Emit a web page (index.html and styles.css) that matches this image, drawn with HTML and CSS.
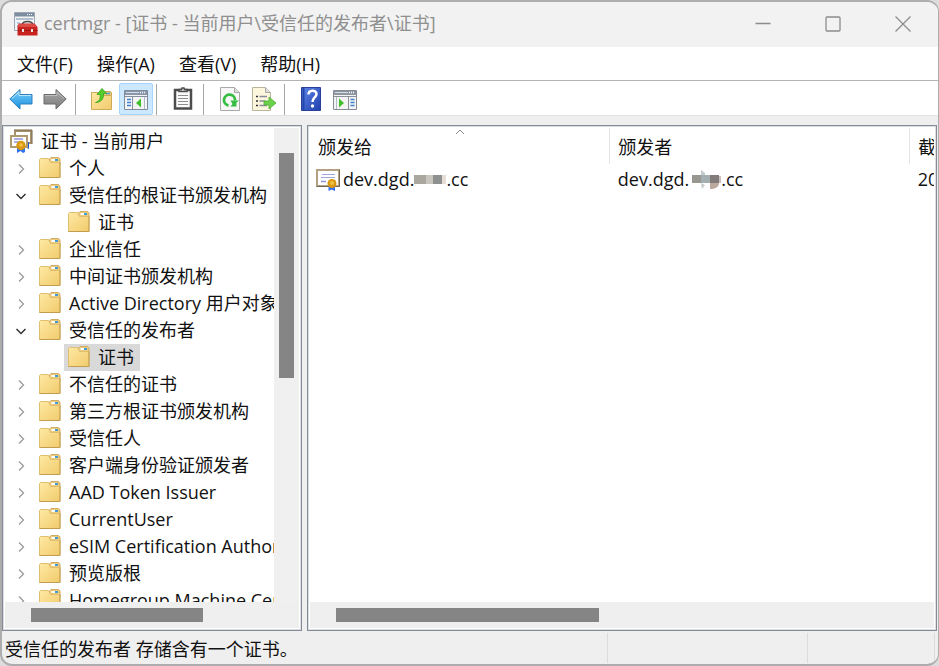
FILE: index.html
```html
<!DOCTYPE html>
<html lang="zh-CN">
<head>
    <meta charset="UTF-8">
    <meta name="viewport" content="width=device-width, initial-scale=1.0">
    <title>certmgr</title>
    <link rel="stylesheet" href="styles.css">
</head>
<body>
    <svg class="sprite" aria-hidden="true">
        <defs>
            <linearGradient id="gold" x1="0" y1="0" x2="1" y2="1">
                <stop offset="0" stop-color="#ffe9a4"/>
                <stop offset="1" stop-color="#f0cb6c"/>
            </linearGradient>
            <linearGradient id="blue" x1="0" y1="0" x2="0" y2="1">
                <stop offset="0" stop-color="#7fd0fa"/>
                <stop offset="1" stop-color="#1590e0"/>
            </linearGradient>
            <linearGradient id="grey" x1="0" y1="0" x2="0" y2="1">
                <stop offset="0" stop-color="#a8a8a8"/>
                <stop offset="1" stop-color="#7c7c7c"/>
            </linearGradient>
            <linearGradient id="help" x1="0" y1="0" x2="1" y2="1">
                <stop offset="0" stop-color="#5f86e6"/>
                <stop offset="1" stop-color="#1f3fae"/>
            </linearGradient>
        </defs>
        <symbol id="folder" viewBox="0 0 22 22">
            <path d="M10.500 6V2L12 .5h7.500L21 2v6z" fill="#eccb7c" stroke="#cfac62"/>
            <path d="M12.500 3h3.500" stroke="#fff" stroke-width="2"/>
            <path d="M16 3h3" stroke="#3f9ad8" stroke-width="2"/>
            <path d="M.5 20.500V2.500L1.500 1.500h8l2 4h9.500v15z" fill="url(#gold)" stroke="#e0bf70"/>
            <path d="M.5 20.500h20.500v-15" fill="none" stroke="#c29c50"/>
        </symbol>
        <symbol id="cert" viewBox="0 0 24 22">
            <path d="M1 1h22v16H1z" fill="#fff" stroke="#b5a181" stroke-width="2"/>
            <path d="M.5 17.500h23V.5" fill="none" stroke="#766750"/>
            <path d="M6 5.500h13M5 8.500h14" stroke="#a3a6dc" stroke-width="1.200"/>
            <path d="M5 12.500h5" stroke="#8f94d6" stroke-width="1.500"/>
            <path d="M12.500 16v6l3-1.500L19 22v-6z" fill="#2f6ff0"/>
            <circle cx="16" cy="14.500" r="4.500" fill="#d99a12"/>
            <circle cx="16" cy="14" r="2" fill="#f3c14a"/>
        </symbol>
        <symbol id="certs" viewBox="0 0 24 24">
            <path d="M6 2h16v12H6z" fill="#fff" stroke="#a8936e" stroke-width="2"/>
            <path d="M5 1h18v14" fill="none" stroke="#766750"/>
            <path d="M15 13v7l2-1.500 3 1.500v-7z" fill="#2459c8"/>
            <path d="M2 7h16v11H2z" fill="#fff" stroke="#b09a74" stroke-width="2"/>
            <path d="M5 10h9M5 13h5" stroke="#9297dc" stroke-width="1.500"/>
            <path d="M8 17v7l3.500-2 2.500 2 2-1v-6z" fill="#2f6ff0"/>
            <circle cx="12" cy="16.500" r="4.700" fill="#d99a12"/>
            <circle cx="12" cy="16" r="1.800" fill="#f3c14a"/>
        </symbol>
        <symbol id="closed" viewBox="0 0 12 12">
            <path d="M4 1.500L8.500 6 4 10.500" fill="none" stroke="#9a9a9a" stroke-width="1.300"/>
        </symbol>
        <symbol id="open" viewBox="0 0 12 12">
            <path d="M1.500 4L6 8.500 10.500 4" fill="none" stroke="#333" stroke-width="1.500"/>
        </symbol>
    </svg>

    <div class="window">
        <header class="titlebar">
            <svg class="app-icon" viewBox="0 0 24 24" aria-hidden="true">
                <path d="M.5.500h20v18H.5z" fill="#f2f5f8" stroke="#9ba6b2"/>
                <path d="M1 1h19v3.500H1z" fill="#7d8da0"/>
                <path d="M13 2.500h5" stroke="#fff" stroke-dasharray="1 1"/>
                <path d="M2 7h17" stroke="#b3c0cc" stroke-width="2"/>
                <path d="M3 11h3M3 14h3" stroke="#7d9cc4"/>
                <path d="M8.500 12.500c0-4 10-4 10 0" fill="none" stroke="#4a4a4a" stroke-width="1.500"/>
                <path d="M5 11.500h15.500L23.500 15v8.500H3.500V14z" fill="#c92321"/>
                <path d="M5 12h15.500L23 15H4z" fill="#dc4c45"/>
                <path d="M4 18.500h19.500" stroke="#a01818"/>
                <path d="M8 17h2v3H8zM17 17h2v3h-2z" fill="#e9e4e2"/>
            </svg>
            <h1 class="title">certmgr - [证书 - 当前用户\受信任的发布者\证书]</h1>
            <button class="caption-btn" aria-label="最小化">
                <svg viewBox="0 0 16 16"><path d="M.5 7.500h15"/></svg>
            </button>
            <button class="caption-btn" aria-label="最大化">
                <svg viewBox="0 0 16 16"><rect x="1" y="1" width="14" height="14" rx="1"/></svg>
            </button>
            <button class="caption-btn" aria-label="关闭">
                <svg viewBox="0 0 16 16"><path d="M.5.500l15 15M15.500.500l-15 15"/></svg>
            </button>
        </header>

        <nav class="menu">
            <button>文件(F)</button>
            <button>操作(A)</button>
            <button>查看(V)</button>
            <button>帮助(H)</button>
        </nav>

        <div class="toolbar">
            <button aria-label="后退">
                <svg viewBox="0 0 24 24">
                    <path d="M.8 12L11 2.500v5h12v9.500H11v5z" fill="url(#blue)" stroke="#2f7fbd"/>
                    <path d="M3 11.500L10 5v3.500h12" fill="none" stroke="#b5e4fb"/>
                </svg>
            </button>
            <button aria-label="前进">
                <svg viewBox="0 0 24 24">
                    <path d="M23.200 12L13 2.500v5H1v9.500h12v5z" fill="url(#grey)" stroke="#6b6b6b"/>
                    <path d="M2 8.500h12V5l7 6.500" fill="none" stroke="#bdbdbd"/>
                </svg>
            </button>
            <span class="sep"></span>
            <button aria-label="向上">
                <svg viewBox="0 0 24 24">
                    <path d="M12.500 8V4.500h8l1 1.500v5z" fill="#eccb7c" stroke="#c9a558"/>
                    <path d="M16 6.500h4" stroke="#3f9ad8" stroke-width="1.500"/>
                    <path d="M1.500 22.500v-17h10l2 3h8v14z" fill="url(#gold)" stroke="#cfaa58"/>
                    <path d="M5.500 15.500c4-1 5-4 4.700-8H7L12 1.500l4.500 5H13.500c.5 6-3 9-8 9z" fill="#52cf2c" stroke="#36a31a" stroke-width=".8"/>
                </svg>
            </button>
            <button class="active" aria-label="显示/隐藏控制台树">
                <svg viewBox="0 0 24 24">
                    <path d="M.5 3.500h23v19H.5z" fill="#f4f4f4" stroke="#7f8a9b"/>
                    <path d="M1 4h22v4H1z" fill="#8896aa"/>
                    <path d="M2 5.500h13" stroke="#d5dde8"/>
                    <path d="M16 5.500h6" stroke="#fff" stroke-width="1.500" stroke-dasharray="1 1"/>
                    <path d="M1 9.500h22M8.500 10v12" stroke="#8490a2"/>
                    <path d="M3 12.500h4M3 15.500h4M3 18.500h4" stroke="#3d7fd0" stroke-width="1.500"/>
                    <path d="M12 16l5-4.500v9z" fill="#3fbf2a"/>
                    <path d="M20.500 10v12" stroke="#b3b9c2"/>
                </svg>
            </button>
            <span class="sep"></span>
            <button aria-label="属性">
                <svg viewBox="0 0 24 24">
                    <path d="M4 3h16v18.500H4z" fill="#fafafa" stroke="#4c4c4c" stroke-width="2.500"/>
                    <path d="M8 4.500V2.500h2.500L11 1h2l.5 1.500H16v2z" fill="#ddd" stroke="#4c4c4c" stroke-width="1.500"/>
                    <path d="M7 8.500h10M7 11.500h10M7 14.500h10M7 17.500h10" stroke="#8d8d8d"/>
                </svg>
            </button>
            <span class="sep"></span>
            <button aria-label="刷新">
                <svg viewBox="0 0 24 24">
                    <path d="M2.500.500h14l5 5v18h-19z" fill="#f7f7f7" stroke="#a9a9a9"/>
                    <path d="M16.500.500v5h5" fill="#ddd" stroke="#a9a9a9"/>
                    <path d="M10.500 18.500a5.500 5.500 0 1 1 6.500-5" fill="none" stroke="#35bd43" stroke-width="2.800"/>
                    <path d="M12.500 13.500h8.500l-2.500 2v4h-6l2-2.500z" fill="#35bd43"/>
                </svg>
            </button>
            <button aria-label="导出列表">
                <svg viewBox="0 0 24 24">
                    <path d="M.5.500h13l5 5v18H.5z" fill="#fbf6dc" stroke="#b9b49c"/>
                    <path d="M13.500.500v5h5" fill="#ddd" stroke="#a9a9a9"/>
                    <path d="M4 9.500h2M4 14h2M4 18.500h2" stroke="#333" stroke-width="1.500"/>
                    <path d="M7.500 9.500H15M7.500 14H13M7.500 18.500H15" stroke="#8a8a9e" stroke-width="1.500"/>
                    <path d="M12 14h5v-4l7 6-7 6v-4h-5z" fill="#6ad24a" stroke="#4fae34" stroke-width=".8"/>
                </svg>
            </button>
            <span class="sep"></span>
            <button aria-label="帮助">
                <svg viewBox="0 0 24 24">
                    <path d="M2.500.500h19v23h-19z" fill="url(#help)" stroke="#274099"/>
                    <path d="M4.500 1v22" stroke="#2346ae" stroke-width="2"/>
                    <path d="M9.500 7.500c0-5 8-5 8-.500 0 3.500-4 3.500-4 8" fill="none" stroke="#fff" stroke-width="2.500"/>
                    <circle cx="13.500" cy="19" r="1.700" fill="#fff"/>
                </svg>
            </button>
            <button aria-label="显示/隐藏操作窗格">
                <svg viewBox="0 0 24 24">
                    <path d="M.5 3.500h23v19H.5z" fill="#f4f4f4" stroke="#858b94"/>
                    <path d="M1 4h22v4H1z" fill="#8e969f"/>
                    <path d="M2 5.500h13" stroke="#d5dde8"/>
                    <path d="M16 5.500h6" stroke="#fff" stroke-width="1.500" stroke-dasharray="1 1"/>
                    <path d="M1 9.500h22M15.500 10v12" stroke="#8a9099"/>
                    <path d="M17.500 12.500h4M17.500 15.500h4M17.500 18.500h4" stroke="#3d7fd0" stroke-width="1.500"/>
                    <path d="M11 16l-5-4.500v9z" fill="#3fbf2a"/>
                    <path d="M3.500 10v12" stroke="#b3b9c2"/>
                </svg>
            </button>
        </div>

        <main class="panes">
            <section class="pane tree-pane">
                <div class="tree-view">
                    <ul class="tree">
                        <li class="node root"><svg class="icon"><use href="#certs"/></svg><span>证书 - 当前用户</span></li>
                        <li class="node"><button class="toggle" aria-label="展开"><svg><use href="#closed"/></svg></button><svg class="icon"><use href="#folder"/></svg><span>个人</span></li>
                        <li class="node"><button class="toggle" aria-label="折叠"><svg><use href="#open"/></svg></button><svg class="icon"><use href="#folder"/></svg><span>受信任的根证书颁发机构</span></li>
                        <li class="node child"><svg class="icon"><use href="#folder"/></svg><span>证书</span></li>
                        <li class="node"><button class="toggle" aria-label="展开"><svg><use href="#closed"/></svg></button><svg class="icon"><use href="#folder"/></svg><span>企业信任</span></li>
                        <li class="node"><button class="toggle" aria-label="展开"><svg><use href="#closed"/></svg></button><svg class="icon"><use href="#folder"/></svg><span>中间证书颁发机构</span></li>
                        <li class="node"><button class="toggle" aria-label="展开"><svg><use href="#closed"/></svg></button><svg class="icon"><use href="#folder"/></svg><span>Active Directory 用户对象</span></li>
                        <li class="node"><button class="toggle" aria-label="折叠"><svg><use href="#open"/></svg></button><svg class="icon"><use href="#folder"/></svg><span>受信任的发布者</span></li>
                        <li class="node child selected"><svg class="icon"><use href="#folder"/></svg><span>证书</span></li>
                        <li class="node"><button class="toggle" aria-label="展开"><svg><use href="#closed"/></svg></button><svg class="icon"><use href="#folder"/></svg><span>不信任的证书</span></li>
                        <li class="node"><button class="toggle" aria-label="展开"><svg><use href="#closed"/></svg></button><svg class="icon"><use href="#folder"/></svg><span>第三方根证书颁发机构</span></li>
                        <li class="node"><button class="toggle" aria-label="展开"><svg><use href="#closed"/></svg></button><svg class="icon"><use href="#folder"/></svg><span>受信任人</span></li>
                        <li class="node"><button class="toggle" aria-label="展开"><svg><use href="#closed"/></svg></button><svg class="icon"><use href="#folder"/></svg><span>客户端身份验证颁发者</span></li>
                        <li class="node"><button class="toggle" aria-label="展开"><svg><use href="#closed"/></svg></button><svg class="icon"><use href="#folder"/></svg><span>AAD Token Issuer</span></li>
                        <li class="node"><button class="toggle" aria-label="展开"><svg><use href="#closed"/></svg></button><svg class="icon"><use href="#folder"/></svg><span>CurrentUser</span></li>
                        <li class="node"><button class="toggle" aria-label="展开"><svg><use href="#closed"/></svg></button><svg class="icon"><use href="#folder"/></svg><span>eSIM Certification Authorities</span></li>
                        <li class="node"><button class="toggle" aria-label="展开"><svg><use href="#closed"/></svg></button><svg class="icon"><use href="#folder"/></svg><span>预览版根</span></li>
                        <li class="node"><button class="toggle" aria-label="展开"><svg><use href="#closed"/></svg></button><svg class="icon"><use href="#folder"/></svg><span>Homegroup Machine Certificates</span></li>
                    </ul>
                </div>
                <div class="scroll-y"><div class="thumb"></div></div>
                <div class="scroll-x"><div class="thumb"></div></div>
            </section>

            <section class="pane list-pane">
                <div class="list-view">
                    <table class="list">
                        <thead>
                            <tr>
                                <th>颁发给
                                    <svg class="sort" viewBox="0 0 10 6"><path d="M1 5l4-4 4 4" fill="none" stroke="#8a8a8a"/></svg>
                                </th>
                                <th>颁发者</th>
                                <th>截止日期</th>
                            </tr>
                        </thead>
                        <tbody>
                            <tr>
                                <td>
                                    <div class="name">
                                        <svg class="icon"><use href="#cert"/></svg>
                                        <span>dev.dgd.</span>
                                        <svg class="mask" viewBox="0 0 32 20" aria-hidden="true">
                                            <path d="M0 6h12v9H0z" fill="#aaa79e"/>
                                            <path d="M12 6h7v9h-7z" fill="#c9c5bf"/>
                                            <path d="M19 6h9v9h-9z" fill="#8f9090"/>
                                            <path d="M28 6h4v9h-4z" fill="#e6ddd4"/>
                                        </svg>
                                        <span>.cc</span>
                                    </div>
                                </td>
                                <td>
                                    <div class="name">
                                        <span>dev.dgd.</span>
                                        <svg class="mask" viewBox="0 0 32 20" aria-hidden="true">
                                            <path d="M3 6h9v8H3z" fill="#97978f"/>
                                            <path d="M12 1l4 3v2h-4zM12 14l4 2-3 4z" fill="#c5cbcb"/>
                                            <path d="M12 6h9v8h-9z" fill="#a3afb1"/>
                                            <path d="M21 6h9v8h-9z" fill="#827b7a"/>
                                            <path d="M21 14h9c0 4-4 6-9 6z" fill="#bba9a0"/>
                                            <path d="M30 7h2v7h-2z" fill="#c8c1bb"/>
                                        </svg>
                                        <span>.cc</span>
                                    </div>
                                </td>
                                <td>2024</td>
                            </tr>
                        </tbody>
                    </table>
                </div>
                <div class="scroll-x"><div class="thumb"></div></div>
            </section>
        </main>

        <footer class="status">
            <div class="status-text">受信任的发布者 存储含有一个证书。</div>
            <div class="status-cell"></div>
            <div class="status-cell last"></div>
        </footer>
    </div>
</body>
</html>
```
FILE: styles.css
```css
* {
    box-sizing: border-box;
    margin: 0;
    padding: 0;
}

body {
    height: 100vh;
    overflow: hidden;
    background-color: #dcdcdc;
    font-family: "Open Sans", "Noto Sans CJK SC", sans-serif;
    font-size: 18px;
    line-height: 27px;
    color: #111;
}

button {
    background: none;
    border: none;
    font: inherit;
    color: inherit;
}

svg {
    display: block;
    flex: none;
}

.sprite {
    position: absolute;
    width: 0;
    height: 0;
}

.window {
    display: flex;
    flex-direction: column;
    height: 100%;
    border: 2px solid #adadad;
    border-right-width: 1px;
    border-radius: 12px;
    background-color: #efefef;
    overflow: hidden;
}

/* title bar */
.titlebar {
    display: flex;
    align-items: center;
    flex: none;
    height: 45px;
    padding: 0 0 2px 12px;
    background-color: #f2f2f2;
}

.app-icon {
    width: 24px;
    height: 24px;
}

.title {
    flex: 1;
    margin-left: 6px;
    font-size: 18px;
    font-weight: normal;
    color: #8f8f8f;
    white-space: nowrap;
    overflow: hidden;
}

.caption-btn {
    display: flex;
    align-items: center;
    justify-content: center;
    width: 70px;
    height: 43px;
}

.caption-btn svg {
    width: 16px;
    height: 16px;
    fill: none;
    stroke: #8c8c8c;
    stroke-width: 1.3;
}

/* menu */
.menu {
    display: flex;
    align-items: center;
    flex: none;
    height: 34px;
    padding: 2px 0 0 3px;
    background-color: #fff;
    border-bottom: 1px solid #b4b4b4;
}

.menu button {
    padding: 0 12px;
}

/* toolbar */
.toolbar {
    display: flex;
    align-items: flex-end;
    flex: none;
    height: 35px;
    padding-left: 2px;
    background-color: #fff;
    border-bottom: 1px solid #e3e3e3;
}

.toolbar button {
    display: flex;
    align-items: center;
    justify-content: center;
    width: 34px;
    height: 32px;
}

.toolbar button.active {
    background-color: #cce8ff;
    border: 1px solid #a6d4fa;
    border-radius: 2px;
}

.toolbar svg {
    width: 24px;
    height: 24px;
}

.sep {
    width: 1px;
    height: 31px;
    margin: 0 9px 0 3px;
    background-color: #a5a5a5;
}

/* panes */
.panes {
    display: grid;
    grid-template-columns: 300px 1fr;
    gap: 5px;
    flex: 1;
    min-height: 0;
    padding: 9px 1px 0 0;
}

.pane {
    display: grid;
    grid-template-rows: 1fr 26px;
    min-width: 0;
    min-height: 0;
    padding: 2px;
    background-color: #fff;
    border: 1px solid #858a96;
    box-shadow: inset 0 0 0 1px #dadde2;
}

.tree-pane {
    grid-template-columns: 1fr 25px;
}

.tree-view,
.list-view {
    min-height: 0;
    overflow: hidden;
}

.tree {
    list-style: none;
}

.node {
    display: flex;
    align-items: center;
    height: 27px;
    padding-left: 6px;
    white-space: nowrap;
}

.node.root {
    padding-left: 4px;
}

.node .icon {
    width: 22px;
    height: 22px;
    margin: 0 8px 2px 0;
}

.node.root .icon {
    width: 24px;
    height: 24px;
}

.node.child {
    width: max-content;
    margin-left: 59px;
    padding: 0 6px 0 4px;
}

.node.selected {
    background-color: #d9d9d9;
}

.toggle {
    display: flex;
    align-items: center;
    justify-content: center;
    flex: none;
    width: 20px;
    height: 20px;
    margin-right: 8px;
}

.toggle svg {
    width: 12px;
    height: 12px;
}

.scroll-y {
    padding: 25px 5px 0;
    background-color: #f0f0f0;
}

.scroll-y .thumb {
    width: 15px;
    height: 50%;
    background-color: #858585;
}

.scroll-x {
    grid-column: 1 / -1;
    padding: 6px 26px;
    background-color: #efefef;
}

.scroll-x .thumb {
    height: 14px;
    background-color: #858585;
}

.tree-pane .scroll-x .thumb {
    width: 172px;
}

.list-pane .scroll-x .thumb {
    width: 46%;
}

/* certificate list */
.list {
    width: 900px;
    table-layout: fixed;
    border-collapse: collapse;
}

.list th {
    position: relative;
    height: 36px;
    padding: 2px 0 0 8px;
    border-right: 1px solid #e5e5e5;
    font-weight: normal;
    text-align: left;
}

.sort {
    position: absolute;
    top: 1px;
    left: 50%;
    width: 10px;
    height: 6px;
    margin-left: -5px;
}

.list td {
    height: 30px;
    padding-left: 8px;
}

.name {
    display: flex;
    align-items: center;
}

.name .icon {
    width: 24px;
    height: 22px;
    margin: 2px 3px 0 -2px;
}

.mask {
    width: 32px;
    height: 20px;
}

/* status bar */
.status {
    display: flex;
    flex: none;
    height: 33px;
    padding: 2px 3px 1px;
}

.status-text {
    flex: 1;
    line-height: 32px;
    white-space: nowrap;
    overflow: hidden;
}

.status-cell {
    width: 200px;
    border-left: 1px solid #dcdcdc;
}

.status-cell.last {
    width: 128px;
    border-right: 1px solid #dcdcdc;
}
```
